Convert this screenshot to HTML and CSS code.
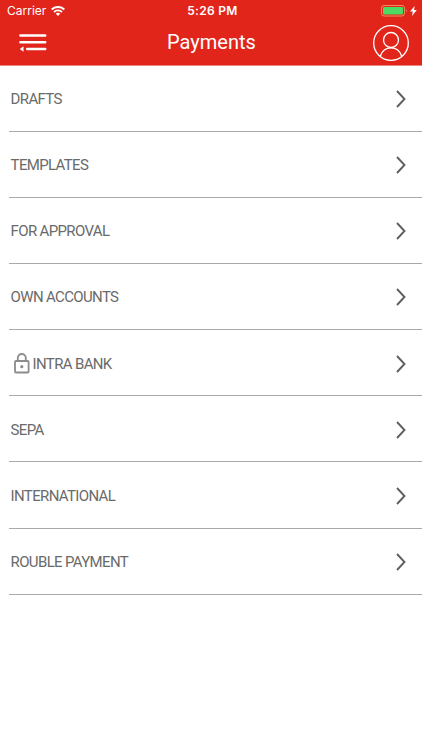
FILE: index.html
```html
<!DOCTYPE html>
<html lang="en">
<head>
  <meta charset="UTF-8">
  <meta name="viewport" content="width=device-width, initial-scale=1">
  <title>Payments</title>
  <link rel="stylesheet" href="styles.css">
</head>
<body>

<header>
  <div class="status">
    <div class="carrier">
      <span>Carrier</span>
      <svg width="14" height="10" viewBox="0 0 14 10" fill="none" stroke="#fff" stroke-width="1.9">
        <path d="M.7 3.5a9 9 0 0 1 12.6 0M3 6a5.7 5.7 0 0 1 8 0"/>
        <path d="M7 10 4.8 7.8a3.1 3.1 0 0 1 4.4 0z" fill="#fff" stroke="none"/>
      </svg>
    </div>
    <div class="time">5:26 PM</div>
    <div class="battery">
      <svg width="37" height="12" viewBox="0 0 37 12">
        <rect x=".5" y=".5" width="23" height="10.5" rx="2.5" fill="none" stroke="#f08b61"/>
        <rect x="2" y="2" width="20" height="7.5" rx="1" fill="#4cd964"/>
        <path d="M25 4q1.5 1.8 0 3.6z" fill="#f49b96"/>
        <path d="M33.7 1 29 6.4h2.8L31 11l4.8-5.9H33z" fill="#fff"/>
      </svg>
    </div>
  </div>
  <div class="nav">
    <svg class="menu" width="28" height="20" viewBox="0 0 28 20" stroke="#fff" stroke-width="2.5" stroke-linecap="round">
      <path d="M1.4 2.5h24.8M1.4 9.2h24.8M8.2 16h18"/>
      <path d="M.8 16 4.5 13.2v5.6z" fill="#fff" stroke="none"/>
    </svg>
    <h1>Payments</h1>
    <svg class="profile" width="36" height="36" viewBox="0 0 36 36" fill="none" stroke="#fff" stroke-width="1.3">
      <circle cx="18" cy="18" r="17.3"/>
      <circle cx="18" cy="15" r="7.5"/>
      <path d="M7.3 31.2c1.6-5 5.5-8.3 10.7-8.3s9.1 3.3 10.7 8.3"/>
    </svg>
  </div>
</header>

<ul class="list">
  <li><span>DRAFTS</span><svg class="arrow" viewBox="0 0 10 18"><path d="M1 1l7.5 8L1 17"/></svg></li>
  <li><span>TEMPLATES</span><svg class="arrow" viewBox="0 0 10 18"><path d="M1 1l7.5 8L1 17"/></svg></li>
  <li><span>FOR APPROVAL</span><svg class="arrow" viewBox="0 0 10 18"><path d="M1 1l7.5 8L1 17"/></svg></li>
  <li><span>OWN ACCOUNTS</span><svg class="arrow" viewBox="0 0 10 18"><path d="M1 1l7.5 8L1 17"/></svg></li>
  <li>
    <svg class="lock" width="16" height="21" viewBox="0 0 16 21" fill="none" stroke="#8c8c8c" stroke-width="1.8">
      <rect x="1" y="8" width="13.6" height="11.5" rx="1"/>
      <path d="M3.8 8V5a4 4 0 0 1 8 0v3"/>
      <circle cx="7.8" cy="13.7" r="1.6" fill="#8c8c8c" stroke="none"/>
    </svg>
    <span>INTRA BANK</span><svg class="arrow" viewBox="0 0 10 18"><path d="M1 1l7.5 8L1 17"/></svg>
  </li>
  <li><span>SEPA</span><svg class="arrow" viewBox="0 0 10 18"><path d="M1 1l7.5 8L1 17"/></svg></li>
  <li><span>INTERNATIONAL</span><svg class="arrow" viewBox="0 0 10 18"><path d="M1 1l7.5 8L1 17"/></svg></li>
  <li><span>ROUBLE PAYMENT</span><svg class="arrow" viewBox="0 0 10 18"><path d="M1 1l7.5 8L1 17"/></svg></li>
</ul>

</body>
</html>
```
FILE: styles.css
```css
* {
  box-sizing: border-box;
}
body {
  margin: 0;
  background-color: #fff;
  color: #6a6a6a;
  font-family: Roboto, "Open Sans", sans-serif;
}
svg {
  display: block;
  flex: none;
}
header {
  height: 65.6px;
  background-color: #e1251b;
  border-bottom: 1px solid #ee8680;
  color: #fff;
}
.status {
  display: grid;
  grid-template-columns: 1fr auto 1fr;
  align-items: center;
  height: 22px;
  padding: 0 4px 0 7px;
  font-family: Inter, sans-serif;
  font-size: 12px;
}
.carrier {
  display: flex;
  align-items: center;
  gap: 5px;
}
.carrier span,
.time {
  padding-bottom: 1px;
}
.time {
  font-weight: 600;
  letter-spacing: 0.3px;
}
.battery {
  justify-self: end;
}
.nav {
  display: grid;
  grid-template-columns: 1fr auto 1fr;
  align-items: center;
  height: 42px;
  padding: 0 13px 0 19px;
}
.nav h1 {
  margin: 0 5px 2px 0;
  font-size: 20px;
  font-weight: 400;
  letter-spacing: 0;
}
.profile {
  justify-self: end;
}
.list {
  list-style: none;
  margin: 0 0 0 8.5px;
  padding: 0;
}
.list li {
  display: flex;
  align-items: center;
  height: 66.15px;
  padding: 1.8px 16px 0 2.1px;
  border-bottom: 1px solid #aaa;
  font-size: 15px;
  letter-spacing: -0.65px;
}
.arrow {
  width: 10px;
  height: 18px;
  margin-left: auto;
  fill: none;
  stroke: #5f5f5f;
  stroke-width: 1.9;
}
.lock {
  margin: 0 3px 0 3px;
}
```
